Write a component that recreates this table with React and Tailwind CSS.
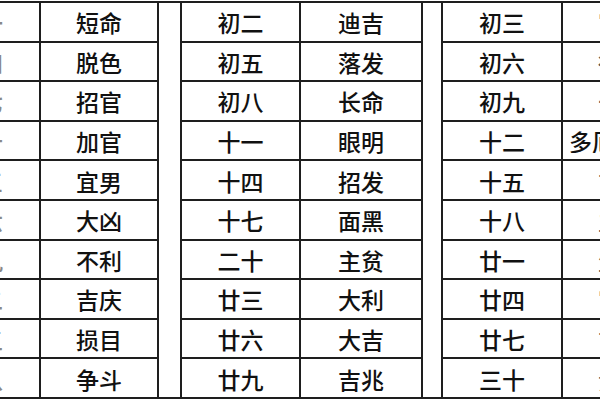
import React from "react";

const colA = ["初一", "初四", "初七", "初十", "十三", "十六", "十九", "廿二", "廿五", "廿八"];
const colB = ["短命", "脱色", "招官", "加官", "宜男", "大凶", "不利", "吉庆", "损目", "争斗"];
const colC = ["初二", "初五", "初八", "十一", "十四", "十七", "二十", "廿三", "廿六", "廿九"];
const colD = ["迪吉", "落发", "长命", "眼明", "招发", "面黑", "主贫", "大利", "大吉", "吉兆"];
const colE = ["初三", "初六", "初九", "十二", "十五", "十八", "廿一", "廿四", "廿七", "三十"];
const colF = ["富贵", "得财", "长命", "多厄多灾", "吉利", "主病", "生子", "富贵", "吉利", "贵人"];

const cell = "border-2 border-[#1e1e1e] h-[39.6px] p-0 pt-[2px] text-center align-middle";

export default function App() {
  return (
    <div
      className="w-[600px] h-[400px] overflow-hidden bg-white text-[#111] pt-[1px]"
      style={{ fontFamily: '"Noto Sans CJK SC", "Noto Sans", sans-serif' }}
    >
      <table className="border-collapse table-fixed w-[600px] text-[23px] leading-none font-medium">
        <colgroup>
          <col className="w-[40px]" />
          <col className="w-[118px]" />
          <col className="w-[23px]" />
          <col className="w-[119px]" />
          <col className="w-[122px]" />
          <col className="w-[20px]" />
          <col className="w-[120px]" />
          <col className="w-[38px]" />
        </colgroup>
        <tbody>
          {colA.map((a, i) => (
            <tr key={i}>
              <td className={cell + " border-l-0"}>
                <div className="w-[39px] overflow-hidden">
                  <div className="w-[118px] ml-[-79px] flex justify-center whitespace-nowrap text-[#888]">
                    {a}
                  </div>
                </div>
              </td>
              <td className={cell}>{colB[i]}</td>
              {i === 0 && <td rowSpan={10} className="border-2 border-[#1e1e1e] p-0"></td>}
              <td className={cell}>{colC[i]}</td>
              <td className={cell}>{colD[i]}</td>
              {i === 0 && <td rowSpan={10} className="border-2 border-[#1e1e1e] p-0"></td>}
              <td className={cell}>{colE[i]}</td>
              <td className={cell + " border-r-0"}>
                <div className="w-[38px] overflow-hidden">
                  <div
                    className={
                      "flex justify-start whitespace-nowrap " +
                      (i === 3 ? "pl-[6px]" : "pl-[35px] text-[#555]")
                    }
                  >
                    {colF[i]}
                  </div>
                </div>
              </td>
            </tr>
          ))}
        </tbody>
      </table>
    </div>
  );
}
